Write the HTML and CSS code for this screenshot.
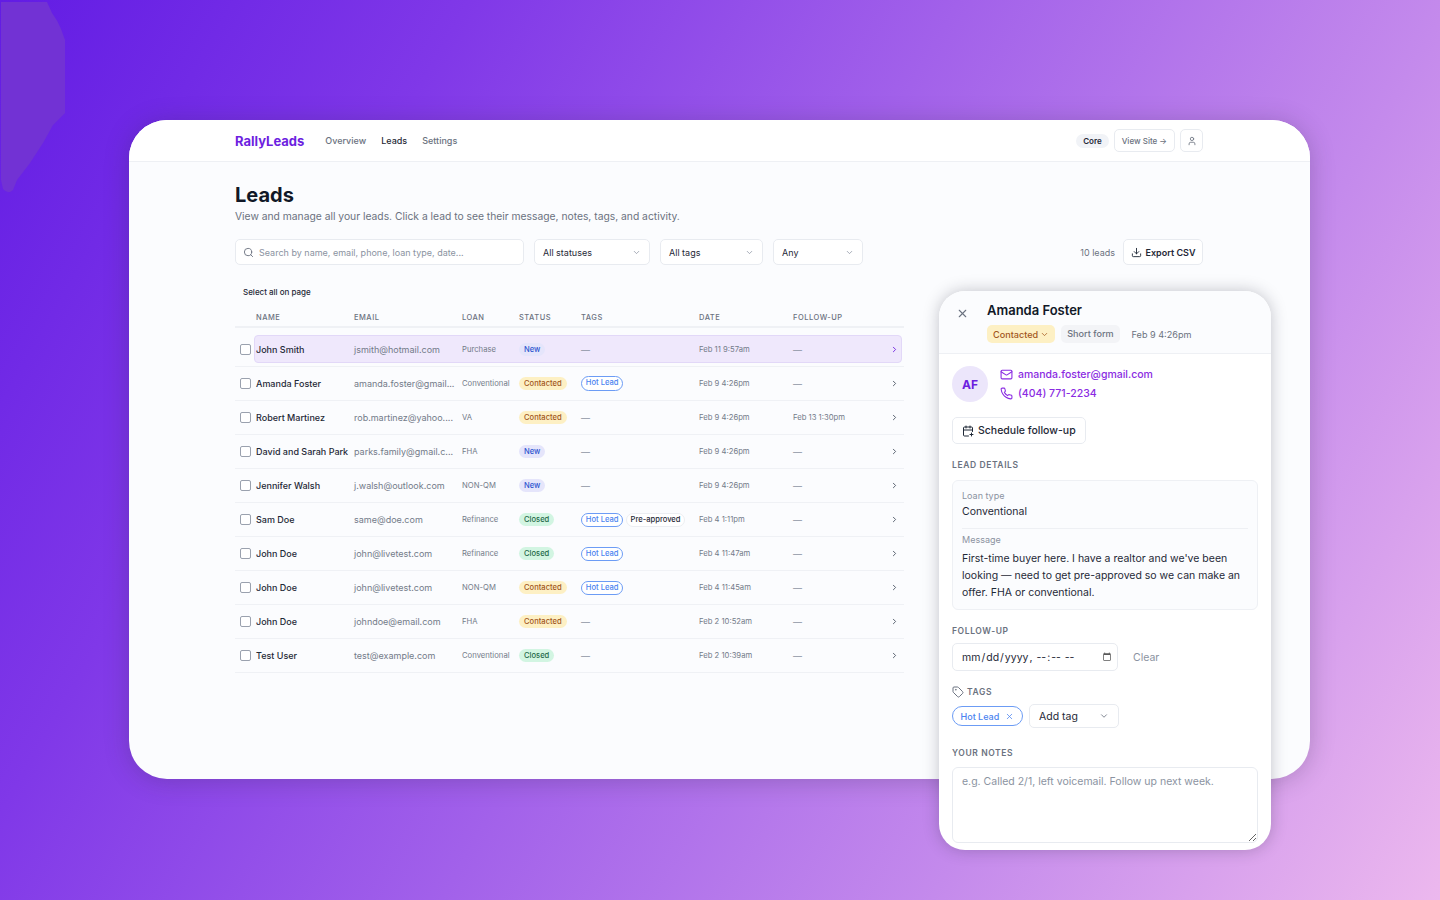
FILE: index.html
```html
<!DOCTYPE html>
<html lang="en">
<head>
    <meta charset="UTF-8">
    <title>RallyLeads - Leads</title>
    <link rel="stylesheet" href="styles.css">
</head>
<body>
    <svg class="blob" width="66" height="196" viewBox="0 0 66 196"><path d="M1 2H47L52 13Q58 21 61 29L65 40V113L53 125L43 143L30 163L17 180L13 190Q8 195 3 189L1 180Z"/></svg>

    <div class="window">
        <nav class="topbar">
            <span class="logo">RallyLeads</span>
            <a class="nav-link">Overview</a>
            <a class="nav-link active">Leads</a>
            <a class="nav-link">Settings</a>
            <span class="spacer"></span>
            <span class="plan">Core</span>
            <a class="view-site">View Site →</a>
            <a class="user-btn">
                <svg class="icon" width="10" height="10" viewBox="0 0 24 24"><path d="M19 21v-2a4 4 0 0 0-4-4H9a4 4 0 0 0-4 4v2"/><circle cx="12" cy="7" r="4"/></svg>
            </a>
        </nav>

        <main class="content">
            <h1>Leads</h1>
            <p class="subtitle">View and manage all your leads. Click a lead to see their message, notes, tags, and activity.</p>

            <div class="filters">
                <div class="search">
                    <svg class="icon" width="11" height="11" viewBox="0 0 24 24"><circle cx="11" cy="11" r="8"/><path d="m21 21-4.3-4.3"/></svg>
                    <span>Search by name, email, phone, loan type, date...</span>
                </div>
                <div class="select w-status">All statuses <svg class="icon" width="9" height="9" viewBox="0 0 24 24"><path d="m6 9 6 6 6-6"/></svg></div>
                <div class="select w-tags">All tags <svg class="icon" width="9" height="9" viewBox="0 0 24 24"><path d="m6 9 6 6 6-6"/></svg></div>
                <div class="select w-any">Any <svg class="icon" width="9" height="9" viewBox="0 0 24 24"><path d="m6 9 6 6 6-6"/></svg></div>
                <span class="spacer"></span>
                <span class="count">10 leads</span>
                <a class="export">
                    <svg class="icon" width="11" height="11" viewBox="0 0 24 24"><path d="M12 15V3"/><path d="M21 15v4a2 2 0 0 1-2 2H5a2 2 0 0 1-2-2v-4"/><path d="m7 10 5 5 5-5"/></svg>
                    Export CSV
                </a>
            </div>

            <div class="select-all">Select all on page</div>

            <div class="table">
                <div class="row head">
                    <span></span><span>NAME</span><span>EMAIL</span><span>LOAN</span><span>STATUS</span><span>TAGS</span><span>DATE</span><span>FOLLOW-UP</span><span></span>
                </div>

                <div class="row selected">
                    <span class="check"></span><span class="name">John Smith</span><span class="email">jsmith@hotmail.com</span><span class="loan">Purchase</span>
                    <span class="cell"><b class="badge new">New</b></span><span class="dash">—</span><span class="date">Feb 11 9:57am</span><span class="dash">—</span>
                    <svg class="icon chev" width="9" height="9" viewBox="0 0 24 24"><path d="m9 18 6-6-6-6"/></svg>
                </div>
                <div class="row">
                    <span class="check"></span><span class="name">Amanda Foster</span><span class="email">amanda.foster@gmail...</span><span class="loan">Conventional</span>
                    <span class="cell"><b class="badge contacted">Contacted</b></span><span class="cell"><b class="tag hot">Hot Lead</b></span><span class="date">Feb 9 4:26pm</span><span class="dash">—</span>
                    <svg class="icon chev" width="9" height="9" viewBox="0 0 24 24"><path d="m9 18 6-6-6-6"/></svg>
                </div>
                <div class="row">
                    <span class="check"></span><span class="name">Robert Martinez</span><span class="email">rob.martinez@yahoo....</span><span class="loan">VA</span>
                    <span class="cell"><b class="badge contacted">Contacted</b></span><span class="dash">—</span><span class="date">Feb 9 4:26pm</span><span class="date">Feb 13 1:30pm</span>
                    <svg class="icon chev" width="9" height="9" viewBox="0 0 24 24"><path d="m9 18 6-6-6-6"/></svg>
                </div>
                <div class="row">
                    <span class="check"></span><span class="name">David and Sarah Park</span><span class="email">parks.family@gmail.c...</span><span class="loan">FHA</span>
                    <span class="cell"><b class="badge new">New</b></span><span class="dash">—</span><span class="date">Feb 9 4:26pm</span><span class="dash">—</span>
                    <svg class="icon chev" width="9" height="9" viewBox="0 0 24 24"><path d="m9 18 6-6-6-6"/></svg>
                </div>
                <div class="row">
                    <span class="check"></span><span class="name">Jennifer Walsh</span><span class="email">j.walsh@outlook.com</span><span class="loan">NON-QM</span>
                    <span class="cell"><b class="badge new">New</b></span><span class="dash">—</span><span class="date">Feb 9 4:26pm</span><span class="dash">—</span>
                    <svg class="icon chev" width="9" height="9" viewBox="0 0 24 24"><path d="m9 18 6-6-6-6"/></svg>
                </div>
                <div class="row">
                    <span class="check"></span><span class="name">Sam Doe</span><span class="email">same@doe.com</span><span class="loan">Refinance</span>
                    <span class="cell"><b class="badge closed">Closed</b></span><span class="cell"><b class="tag hot">Hot Lead</b><b class="tag plain">Pre-approved</b></span><span class="date">Feb 4 1:11pm</span><span class="dash">—</span>
                    <svg class="icon chev" width="9" height="9" viewBox="0 0 24 24"><path d="m9 18 6-6-6-6"/></svg>
                </div>
                <div class="row">
                    <span class="check"></span><span class="name">John Doe</span><span class="email">john@livetest.com</span><span class="loan">Refinance</span>
                    <span class="cell"><b class="badge closed">Closed</b></span><span class="cell"><b class="tag hot">Hot Lead</b></span><span class="date">Feb 4 11:47am</span><span class="dash">—</span>
                    <svg class="icon chev" width="9" height="9" viewBox="0 0 24 24"><path d="m9 18 6-6-6-6"/></svg>
                </div>
                <div class="row">
                    <span class="check"></span><span class="name">John Doe</span><span class="email">john@livetest.com</span><span class="loan">NON-QM</span>
                    <span class="cell"><b class="badge contacted">Contacted</b></span><span class="cell"><b class="tag hot">Hot Lead</b></span><span class="date">Feb 4 11:45am</span><span class="dash">—</span>
                    <svg class="icon chev" width="9" height="9" viewBox="0 0 24 24"><path d="m9 18 6-6-6-6"/></svg>
                </div>
                <div class="row">
                    <span class="check"></span><span class="name">John Doe</span><span class="email">johndoe@email.com</span><span class="loan">FHA</span>
                    <span class="cell"><b class="badge contacted">Contacted</b></span><span class="dash">—</span><span class="date">Feb 2 10:52am</span><span class="dash">—</span>
                    <svg class="icon chev" width="9" height="9" viewBox="0 0 24 24"><path d="m9 18 6-6-6-6"/></svg>
                </div>
                <div class="row">
                    <span class="check"></span><span class="name">Test User</span><span class="email">test@example.com</span><span class="loan">Conventional</span>
                    <span class="cell"><b class="badge closed">Closed</b></span><span class="dash">—</span><span class="date">Feb 2 10:39am</span><span class="dash">—</span>
                    <svg class="icon chev" width="9" height="9" viewBox="0 0 24 24"><path d="m9 18 6-6-6-6"/></svg>
                </div>
            </div>
        </main>
    </div>

    <aside class="panel">
        <header class="panel-head">
            <svg class="icon close" width="13" height="13" viewBox="0 0 24 24"><path d="M18 6 6 18"/><path d="m6 6 12 12"/></svg>
            <div>
                <h2>Amanda Foster</h2>
                <div class="panel-meta">
                    <span class="status-pill">Contacted <svg class="icon" width="9" height="9" viewBox="0 0 24 24"><path d="m6 9 6 6 6-6"/></svg></span>
                    <span class="source">Short form</span>
                    <span class="when">Feb 9 4:26pm</span>
                </div>
            </div>
        </header>

        <div class="panel-body">
            <div class="contact">
                <span class="avatar">AF</span>
                <div class="contact-lines">
                    <a><svg class="icon" width="13" height="13" viewBox="0 0 24 24"><rect x="2" y="4" width="20" height="16" rx="2"/><path d="m22 7-8.97 5.7a1.94 1.94 0 0 1-2.06 0L2 7"/></svg>amanda.foster@gmail.com</a>
                    <a><svg class="icon" width="13" height="13" viewBox="0 0 24 24"><path d="M22 16.92v3a2 2 0 0 1-2.18 2 19.79 19.79 0 0 1-8.63-3.07 19.5 19.5 0 0 1-6-6 19.79 19.79 0 0 1-3.07-8.67A2 2 0 0 1 4.11 2h3a2 2 0 0 1 2 1.72 12.84 12.84 0 0 0 .7 2.81 2 2 0 0 1-.45 2.11L8.09 9.91a16 16 0 0 0 6 6l1.27-1.27a2 2 0 0 1 2.11-.45 12.84 12.84 0 0 0 2.81.7A2 2 0 0 1 22 16.92z"/></svg>(404) 771-2234</a>
                </div>
            </div>

            <a class="schedule">
                <svg class="icon" width="12" height="12" viewBox="0 0 24 24"><path d="M8 2v4"/><path d="M16 2v4"/><path d="M21 13V6a2 2 0 0 0-2-2H5a2 2 0 0 0-2 2v14a2 2 0 0 0 2 2h8"/><path d="M3 10h18"/><path d="M16 19h6"/><path d="M19 16v6"/></svg>
                Schedule follow-up
            </a>

            <div class="section-label">LEAD DETAILS</div>
            <div class="details">
                <div class="detail-label">Loan type</div>
                <div class="detail-value">Conventional</div>
                <hr>
                <div class="detail-label">Message</div>
                <p>First-time buyer here. I have a realtor and we've been looking — need to get pre-approved so we can make an offer. FHA or conventional.</p>
            </div>

            <div class="section-label followup-label">FOLLOW-UP</div>
            <div class="followup">
                <input class="date-input" type="datetime-local">
                <span class="clear">Clear</span>
            </div>

            <div class="section-label tags-label">
                <svg class="icon" width="12" height="12" viewBox="0 0 24 24"><path d="M12.586 2.586A2 2 0 0 0 11.172 2H4a2 2 0 0 0-2 2v7.172a2 2 0 0 0 .586 1.414l8.704 8.704a2.426 2.426 0 0 0 3.42 0l6.58-6.58a2.426 2.426 0 0 0 0-3.42z"/><circle cx="7.5" cy="7.5" r=".5"/></svg>
                TAGS
            </div>
            <div class="tag-row">
                <span class="tag-chip">Hot Lead <svg class="icon" width="9" height="9" viewBox="0 0 24 24"><path d="M18 6 6 18"/><path d="m6 6 12 12"/></svg></span>
                <span class="add-tag">Add tag <svg class="icon" width="10" height="10" viewBox="0 0 24 24"><path d="m6 9 6 6 6-6"/></svg></span>
            </div>

            <div class="section-label notes-label">YOUR NOTES</div>
            <textarea class="notes" placeholder="e.g. Called 2/1, left voicemail. Follow up next week."></textarea>
        </div>
    </aside>
</body>
</html>
```

FILE: styles.css
```css
* {
    box-sizing: border-box;
}

body {
    margin: 0;
    height: 900px;
    overflow: hidden;
    position: relative;
    font-family: 'Inter', Arial, sans-serif;
    color: #111827;
    background: linear-gradient(120deg, #621ce4 0%, #8038e8 24%, #c48aec 74%, #ecb8ee 100%);
    padding: 120px 130px 0 129px;
}

b {
    font-weight: 500;
}

.icon {
    fill: none;
    stroke: currentColor;
    stroke-width: 2;
    stroke-linecap: round;
    stroke-linejoin: round;
    flex: none;
}

.spacer {
    flex: 1;
}

.blob {
    position: absolute;
    left: 0;
    top: 0;
    fill: #7232d4;
}

/* main window */
.window {
    height: 659px;
    background: #fbfcfe;
    border-radius: 38px;
    overflow: hidden;
    box-shadow: 0 2px 24px rgba(50, 40, 70, 0.26);
}

.topbar {
    height: 42px;
    background: #fff;
    border-bottom: 1px solid #eef0f4;
    display: flex;
    align-items: center;
    padding: 0 107px 0 106px;
}

.logo {
    font-size: 13px;
    font-weight: 700;
    color: #6d1fe0;
    margin-right: 21px;
}

.nav-link {
    font-size: 9px;
    font-weight: 500;
    color: #6b7280;
    margin-right: 15px;
}

.nav-link.active {
    color: #1f2937;
}

.plan {
    font-size: 8px;
    font-weight: 600;
    background: #f1f3f7;
    color: #1f2937;
    padding: 2px 7px;
    border-radius: 8px;
    margin-right: 5px;
}

.view-site {
    font-size: 8px;
    font-weight: 500;
    color: #6b7280;
    height: 23px;
    padding: 0 7px;
    display: flex;
    align-items: center;
    border: 1px solid #e8ebf0;
    border-radius: 5px;
    background: #fff;
    margin-right: 5px;
}

.user-btn {
    width: 23px;
    height: 23px;
    display: flex;
    align-items: center;
    justify-content: center;
    color: #6b7280;
    border: 1px solid #e8ebf0;
    border-radius: 5px;
    background: #fff;
}

.content {
    padding: 21px 406px 0 106px;
}

h1 {
    margin: 0;
    font-size: 20px;
    line-height: 24px;
    font-weight: 700;
    color: #111827;
}

.subtitle {
    margin: 2px 0 0;
    font-size: 10.3px;
    line-height: 15px;
    color: #6b7280;
}

.filters {
    display: flex;
    align-items: center;
    gap: 10px;
    margin: 15px -299px 0 0;
}

.search,
.select,
.export {
    height: 26px;
    background: #fff;
    border: 1px solid #e8ebf0;
    border-radius: 5px;
    display: flex;
    align-items: center;
}

.search {
    width: 289px;
    padding: 0 7px;
    gap: 5px;
    font-size: 9px;
    color: #8b93a1;
}

.search .icon {
    color: #6b7280;
}

.select {
    justify-content: space-between;
    padding: 0 8px;
    font-size: 9px;
    color: #1f2937;
}

.select .icon {
    color: #8b93a1;
}

.w-status { width: 116px; }
.w-tags { width: 103px; }
.w-any { width: 90px; }

.count {
    font-size: 9px;
    color: #6b7280;
    margin-right: -2px;
}

.export {
    width: 80px;
    justify-content: center;
    gap: 4px;
    font-size: 9px;
    font-weight: 600;
    color: #1f2937;
}

.select-all {
    font-size: 8px;
    font-weight: 500;
    color: #1f2937;
    margin: 21px 0 0 8px;
    line-height: 12px;
}

.table {
    margin-top: 12px;
    width: 669px;
}

.row {
    display: grid;
    grid-template-columns: 21px 98px 108px 57px 62px 118px 94px 1fr 14px;
    align-items: center;
    height: 34.1px;
    border-bottom: 1px solid #eff1f5;
    position: relative;
}

.row.head {
    height: 18px;
    margin-bottom: 4.5px;
    padding-bottom: 2px;
    border-bottom: 2px solid #eff1f5;
    font-size: 7.5px;
    font-weight: 500;
    letter-spacing: 0.5px;
    color: #6b7280;
}

.row.selected::before {
    content: "";
    position: absolute;
    left: 19px;
    right: 2px;
    top: 2px;
    bottom: 3px;
    background: #efe8fc;
    border: 1px solid #e2d8f8;
    border-radius: 4px;
}

.row > * {
    position: relative;
    white-space: nowrap;
}

.cell {
    display: flex;
    align-items: center;
    gap: 2.5px;
}

.check {
    width: 11px;
    height: 11px;
    margin-left: 5px;
    border: 1.2px solid #9aa1ae;
    border-radius: 2px;
    background: #fff;
}

.name {
    font-size: 9px;
    font-weight: 500;
    color: #1f2937;
}

.email {
    font-size: 9px;
    color: #737b89;
}

.loan {
    font-size: 7.7px;
    color: #737b89;
}

.date {
    font-size: 7.7px;
    color: #737b89;
}

.dash {
    font-size: 9px;
    color: #8b93a1;
}

.chev {
    color: #4b5563;
    stroke-width: 2.4;
}

.selected .chev {
    color: #6d1fe0;
}

.badge {
    font-size: 7.6px;
    line-height: 13px;
    padding: 0 5px;
    border-radius: 7px;
}

.badge.new {
    background: #e5e5fb;
    color: #2f56d0;
}

.badge.contacted {
    background: #fdf0c4;
    color: #a2561c;
}

.badge.closed {
    background: #d2f5e2;
    color: #1f6a4a;
}

.tag {
    font-size: 7.6px;
    line-height: 12.5px;
    margin-top: 1px;
    padding: 0 3.8px;
    border-radius: 8px;
    border: 1px solid;
}

.tag.hot {
    color: #4c84f0;
    border-color: #6c9cf5;
    background: #fff;
}

.tag.plain {
    color: #1f2937;
    border-color: #eceef2;
    background: #fff;
}

/* lead panel, sits over the window */
.panel {
    position: absolute;
    left: 939px;
    top: 291px;
    width: 332px;
    height: 559px;
    background: #fff;
    border-radius: 26px;
    overflow: hidden;
    box-shadow: 0 0 16px rgba(30, 30, 50, 0.26);
}

.panel-head {
    height: 63px;
    background: #fbfcfe;
    border-bottom: 1px solid #eef0f4;
    display: flex;
    padding: 10px 0 0 17px;
    gap: 18px;
}

.close {
    color: #6b7280;
    margin-top: 6px;
}

h2 {
    margin: 0;
    font-size: 13px;
    line-height: 19px;
    font-weight: 600;
    color: #111827;
}

.panel-meta {
    display: flex;
    align-items: center;
    margin-top: 5px;
    font-size: 9.1px;
}

.status-pill {
    height: 18px;
    padding: 0 6px;
    display: flex;
    align-items: center;
    gap: 2px;
    background: #fdf0c4;
    color: #a2561c;
    font-weight: 500;
    border-radius: 5px;
}

.source {
    height: 18px;
    line-height: 18px;
    padding: 0 6px;
    margin-left: 6px;
    background: #f3f4f7;
    color: #6b7280;
    font-weight: 500;
    border-radius: 5px;
}

.when {
    margin-left: 12px;
    color: #6b7280;
}

.panel-body {
    padding: 11px 13px 0;
}

.contact {
    display: flex;
    align-items: center;
    gap: 12px;
}

.avatar {
    width: 36px;
    height: 36px;
    border-radius: 50%;
    background: #ece6fb;
    color: #6d1fe0;
    font-size: 12px;
    font-weight: 700;
    display: flex;
    align-items: center;
    justify-content: center;
}

.contact-lines a {
    display: flex;
    align-items: center;
    gap: 5px;
    font-size: 10.5px;
    line-height: 19px;
    font-weight: 500;
    color: #8a2be2;
}

.schedule {
    display: inline-flex;
    align-items: center;
    gap: 4px;
    height: 27px;
    margin-top: 14px;
    padding: 0 9px;
    font-size: 10.5px;
    font-weight: 500;
    color: #1f2937;
    border: 1px solid #e8ebf0;
    border-radius: 5px;
    background: #fff;
}

.section-label {
    font-size: 8.5px;
    font-weight: 600;
    letter-spacing: 0.6px;
    line-height: 12px;
    color: #6b7280;
    margin-top: 15px;
}

.details {
    margin-top: 9px;
    height: 130px;
    padding: 9px 9px 0;
    background: #fbfcfe;
    border: 1px solid #eef0f4;
    border-radius: 6px;
}

.detail-label {
    font-size: 9px;
    line-height: 12px;
    color: #8b93a1;
}

.detail-value {
    font-size: 10.5px;
    line-height: 16px;
    margin-top: 2px;
    color: #1f2937;
}

.details hr {
    border: 0;
    border-top: 1px solid #eef0f4;
    margin: 8px 0 5px;
}

.details p {
    margin: 4px 0 0;
    font-size: 10.5px;
    line-height: 17.2px;
    color: #1f2937;
}

.followup-label {
    margin-top: 15px;
}

.followup {
    display: flex;
    align-items: center;
    margin-top: 6px;
}

.date-input {
    width: 166px;
    height: 28px;
    padding: 0 0 0 8px;
    font-family: inherit;
    font-size: 10.5px;
    color: #1f2937;
    border: 1px solid #e8ebf0;
    border-radius: 5px;
    background: #fff;
}

.date-input::-webkit-calendar-picker-indicator {
    opacity: 0.65;
    margin-right: 3px;
}

.clear {
    margin-left: 15px;
    font-size: 10.5px;
    color: #8b93a1;
}

.tags-label {
    display: flex;
    align-items: center;
    gap: 3px;
    margin-top: 15px;
}

.tag-row {
    display: flex;
    align-items: center;
    gap: 6px;
    margin-top: 6px;
}

.tag-chip {
    display: flex;
    align-items: center;
    justify-content: space-between;
    width: 71px;
    height: 20px;
    padding: 0 8px 0 7.5px;
    font-size: 9px;
    font-weight: 500;
    color: #4c84f0;
    border: 1px solid #6c9cf5;
    border-radius: 10px;
}

.add-tag {
    display: flex;
    align-items: center;
    justify-content: space-between;
    width: 90px;
    height: 24px;
    padding: 0 9px;
    font-size: 10.5px;
    color: #1f2937;
    border: 1px solid #e8ebf0;
    border-radius: 5px;
}

.add-tag .icon {
    color: #6b7280;
}

.notes-label {
    margin-top: 19px;
}

.notes {
    display: block;
    width: 100%;
    height: 76px;
    margin-top: 8px;
    padding: 6px 9px;
    font-family: inherit;
    font-size: 10.5px;
    line-height: 15px;
    border: 1px solid #e8ebf0;
    border-radius: 6px;
    background: #fff;
}

.notes::placeholder {
    color: #8b93a1;
}
```
